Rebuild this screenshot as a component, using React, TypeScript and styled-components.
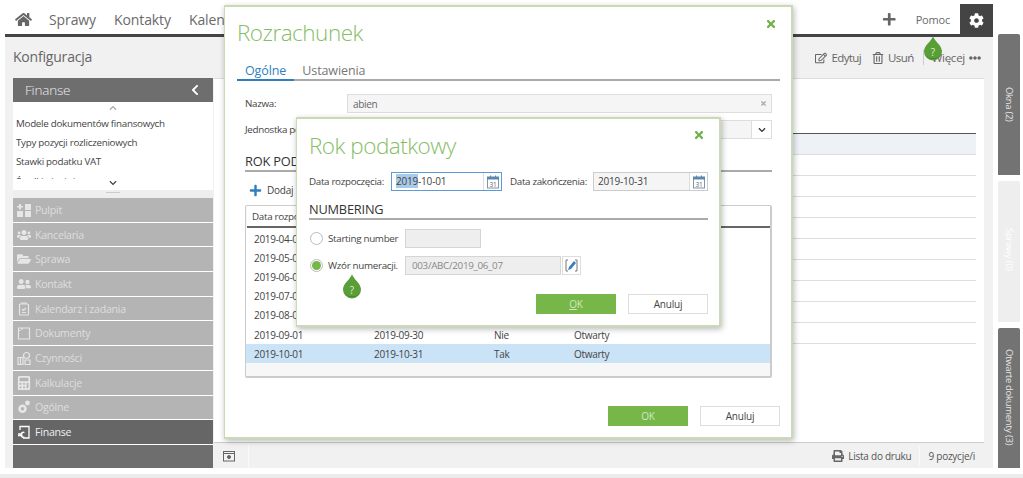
import React from 'react';
import styled, { createGlobalStyle } from 'styled-components';
import { FaHome, FaPlus, FaCog, FaRegEdit, FaRegTrashAlt, FaEllipsisH, FaChevronLeft, FaChevronDown, FaChevronUp, FaUsers, FaFolderOpen, FaUserFriends, FaCalculator, FaPrint, FaTimes } from 'react-icons/fa';

const Global = createGlobalStyle`
  html, body { margin: 0; padding: 0; background: #fff; }
  body { font-family: "Open Sans", "Noto Sans", sans-serif; color: #444; overflow: hidden; }
  * { box-sizing: border-box; }
`;

const Page = styled.div`position: relative; width: 1023px; height: 478px; overflow: hidden; display: flex; flex-direction: column;`;
const Shell = styled.div`display: flex; height: 468px; padding: 4px 0 0 5px;`;
const Strip = styled.div`height: 4px; margin-top: 6px; background: #ececec;`;
const Main = styled.div`width: 988px; display: flex; flex-direction: column;`;
const TopBar = styled.div`height: 33px; border-bottom: 3px solid #444; display: flex; align-items: center; font-size: 14px; color: #6a6a6a;`;
const HomeIcon = styled(FaHome)`font-size: 15px; width: 17px; color: #666; margin: 0 17px 0 10px;`;
const NavLink = styled.span`margin-right: 18px; letter-spacing: -0.1px;`;
const Spacer = styled.div`flex: 1;`;
const PlusIcon = styled(FaPlus)`font-size: 14.5px; color: #666; margin-right: 19px;`;
const Help = styled.span`font-size: 11px; margin-right: 10px; letter-spacing: -0.2px;`;
const GearBox = styled.div`width: 33px; height: 33px; margin-bottom: -3px; background: #444; color: #fff; display: flex; align-items: center; justify-content: center; font-size: 15px;`;
const Work = styled.div`flex: 1; background: #f1f1f1; padding: 0 9px 0 8px; display: flex; flex-direction: column; min-height: 0;`;
const WorkHead = styled.div`height: 41px; display: flex; align-items: center; padding: 0 3px 2px 0;`;
const WorkTitle = styled.div`font-size: 14px; color: #666; letter-spacing: -0.2px;`;
const Action = styled.span`display: flex; align-items: center; gap: 4px; font-size: 11.5px; color: #666; margin-left: ${p => p.$ml ?? 12}px; margin-top: 2px; letter-spacing: ${p => p.$tight ? -0.6 : -0.25}px; svg { font-size: 12px; }`;
const ActionSep = styled.span`width: 1px; height: 15px; background: #ccc; margin: 2px -4px 0 9px;`;
const WorkBody = styled.div`flex: 1; display: flex; min-height: 0;`;
const Sidebar = styled.div`width: 200px; display: flex; flex-direction: column;`;
const SideHead = styled.div`height: 24px; background: #6e6e6e; color: #eee; display: flex; align-items: center; justify-content: space-between; padding: 0 12px; font-size: 13.5px; font-weight: 300; letter-spacing: -0.2px; svg { color: #fff; font-size: 12px; }`;
const SideList = styled.div`position: relative; height: 88px; background: #fff;`;
const SideClip = styled.div`height: 77px; overflow: hidden; padding-top: 12px; font-size: 9.8px; color: #444; letter-spacing: -0.28px;`;
const SideItem = styled.div`height: 19.2px; line-height: 19.2px; padding-left: 3px;`;
const Scroller = styled.div`position: absolute; left: 96px; font-size: 8px; color: ${p => p.$dark ? '#444' : '#aaa'}; top: ${p => p.$top}px; line-height: 8px;`;
const Handle = styled.div`height: 8px; background: #eee; display: flex; justify-content: center; padding-top: 2px; &::after { content: ''; width: 14px; height: 1px; background: #ccc; }`;
const MenuList = styled.div`flex: 1; display: flex; flex-direction: column; background: #fff; gap: 1px;`;
const MenuItem = styled.div`height: 23.7px; flex: none; display: flex; align-items: center; gap: 4px; padding-left: 4px; font-size: 10.6px; letter-spacing: -0.25px; background: ${p => p.$active ? '#666' : '#b4b4b4'}; color: ${p => p.$active ? '#eee' : '#dedede'}; svg { width: 14px; height: 14px; flex: none; color: ${p => p.$active ? '#fff' : '#e6e6e6'}; }`;
const MenuFill = styled.div`flex: 1; background: #6e6e6e;`;
const Content = styled.div`flex: 1; display: flex; flex-direction: column; margin-left: 1px; border-top: 1px solid #ddd;`;
const Panel = styled.div`flex: 1; background: #fff; padding: 0 8px 0 10px;`;
const ListHead = styled.div`height: 55px; border-bottom: 1px solid #555;`;
const ListRow = styled.div`height: 21px; border-bottom: 1px solid #ddd; background: ${p => p.$shade ? '#eef2f6' : '#fff'};`;
const Status = styled.div`height: 26px; border-top: 1px solid #ccc; display: flex; align-items: center; font-size: 10px; color: #555; padding: 0 9px 0 9px;`;
const StatusBtn = styled.div`padding-right: 13px; border-right: 1px solid #fafafa; height: 22px; display: flex; align-items: center; color: #666; font-size: 12px; margin-right: auto;`;
const StatusItem = styled.span`display: flex; align-items: center; gap: 4px; letter-spacing: -0.25px; svg { font-size: 12px; color: #666; }`;
const StatusDiv = styled.span`width: 1px; height: 20px; background: #fafafa; margin: 0 8px;`;
const Rail = styled.div`width: 22px; margin-left: 5px; margin-top: 30px; display: flex; flex-direction: column; gap: 6px;`;
const RailTab = styled.div`flex: none; height: ${p => p.$h}px; overflow: hidden; border-radius: 2px 2px 0 0; background: ${p => p.$off ? '#eee' : '#737373'}; color: ${p => p.$off ? '#fff' : '#e4e4e4'}; writing-mode: vertical-rl; font-size: 9.5px; padding-top: ${p => p.$pad}px; display: flex; align-items: center; letter-spacing: -0.3px; white-space: nowrap;`;

const Modal = styled.div`position: absolute; left: ${p => p.$l}px; top: ${p => p.$t}px; width: ${p => p.$w}px; height: ${p => p.$h}px; background: #fff; border: 2px solid #c8dab6; border-left-width: 1.5px; box-shadow: 1px 2px 6px rgba(0,0,0,.28); display: flex; flex-direction: column;`;
const ModalTitle = styled.div`font-size: 22.5px; font-weight: 300; line-height: 30px; color: #86bd66; letter-spacing: -0.5px;`;
const Close = styled(FaTimes)`position: absolute; right: ${p => p.$r}px; top: ${p => p.$t}px; font-size: 12px; color: #72b04c;`;
const OuterBody = styled.div`flex: 1; display: flex; flex-direction: column; padding: 11px 11px 0 12px;`;
const Tabs = styled.div`display: flex; height: 25px; margin-top: 8px; padding-top: 6px; border-bottom: 2px solid #aaa; font-size: 12.5px;`;
const TabItem = styled.div`padding: 0 8px; height: 19px; line-height: 17px; letter-spacing: -0.1px; color: ${p => p.$on ? '#2f7fbf' : '#777'}; border-bottom: ${p => p.$on ? '2px solid #2f7fbf' : 'none'};`;
const Inner = styled.div`padding: 0 8px; display: flex; flex-direction: column;`;
const FormRow = styled.div`display: flex; align-items: center; height: 19px; margin-top: ${p => p.$mt}px; font-size: 9.8px; color: #444; letter-spacing: -0.3px;`;
const FormLabel = styled.div`width: 102px; flex: none; white-space: nowrap;`;
const TextBox = styled.div`flex: 1; height: 19px; background: #f5f5f5; border: 1px solid #ddd; display: flex; align-items: center; justify-content: space-between; padding: 0 4px 0 5px; color: #666; font-size: 10px; svg { font-size: 7px; color: #aaa; }`;
const Select = styled.div`flex: 1; height: 19px; background: #f5f5f5; border: 1px solid #ddd; display: flex; justify-content: flex-end;`;
const SelectBtn = styled.div`width: 20px; background: #fff; border-left: 1px solid #ddd; display: flex; align-items: center; justify-content: center; font-size: 8px; color: #333;`;
const Section = styled.div`font-size: 12.8px; height: 22px; line-height: 22px; border-bottom: 2px solid #aaa; margin-top: ${p => p.$mt}px; color: #333; letter-spacing: -0.2px;`;
const AddRow = styled.div`display: flex; align-items: center; gap: 5px; font-size: 10px; letter-spacing: -0.25px; height: 20px; margin: 8px 0 5px 4px; color: #444; svg { font-size: 13px; color: #2f7fbf; }`;
const Table = styled.div`height: 173px; width: 527px; border: 1px solid #ccc; border-width: 1px 2px 2px 1px; border-radius: 2px; background: #f7f7f7; display: flex; flex-direction: column;`;
const THead = styled.div`height: 22px; background: #fff; margin-left: 1px; border-bottom: 2px solid #666; font-size: 9.8px; letter-spacing: -0.3px; padding-left: 5px; line-height: 22px; color: #444;`;
const TBody = styled.div`padding-top: 1px; background: #fff;`;
const TRow = styled.div`height: 19.2px; display: grid; grid-template-columns: 120px 120px 80px 1fr; padding-left: 8px; align-items: center; font-size: 10px; letter-spacing: -0.3px; color: #444; background: ${p => p.$sel ? '#cbe3f6' : '#fff'};`;
const Footer = styled.div`margin-top: auto; display: flex; justify-content: flex-end; gap: 12px; padding-bottom: 11px;`;
const Btn = styled.div`width: 80px; height: 20px; display: flex; align-items: center; justify-content: center; font-size: 10px; letter-spacing: -0.2px; background: ${p => p.$ok ? '#77b74a' : '#fff'}; color: ${p => p.$ok ? '#cfe8bc' : '#444'}; border: 1px solid ${p => p.$ok ? '#77b74a' : '#ddd'}; u { text-decoration: underline; }`;

const InnerBody = styled.div`flex: 1; display: flex; flex-direction: column; padding: 12px 11px 0 12px;`;
const DateRow = styled.div`display: flex; align-items: center; height: 19px; margin-top: 11px; font-size: 9.8px; letter-spacing: -0.32px; color: #444; white-space: nowrap;`;
const DateLabel = styled.span`width: ${p => p.$w}px; flex: none;`;
const DateBox = styled.div`width: ${p => p.$w}px; height: 19px; margin-right: ${p => p.$mr}px; flex: none; display: flex; font-size: 10px; letter-spacing: -0.2px; color: #444; background: ${p => p.$focus ? '#fff' : '#f5f5f5'}; border: 1px solid ${p => p.$focus ? '#5b9bd5' : '#ccc'};`;
const DateText = styled.div`flex: 1; padding-left: 4px; line-height: 17px;`;
const Sel = styled.span`background: #a9c9e8;`;
const CalBtn = styled.div`width: 18px; border-left: 1px solid #ddd; background: #fff; display: flex; align-items: center; justify-content: center;`;
const NumRow = styled.div`display: flex; align-items: center; height: 19px; margin-top: ${p => p.$mt}px; font-size: 9.8px; letter-spacing: -0.3px; color: #444; white-space: nowrap;`;
const Radio = styled.span`width: 13px; height: 13px; border-radius: 50%; border: 1px solid #bbb; margin: 0 5px 0 1px; display: flex; align-items: center; justify-content: center; flex: none; &::after { content: ''; width: 9px; height: 9px; border-radius: 50%; background: ${p => p.$on ? '#77b74a' : 'transparent'}; }`;
const NumLabel = styled.span`width: 77px; flex: none;`;
const NumBox = styled.div`width: ${p => p.$w}px; height: 19px; background: #eee; border: 1px solid #d5d5d5; padding-left: 6px; line-height: 17px; color: #888; flex: none;`;
const PickBtn = styled.div`width: 19px; height: 19px; margin-left: 1px; border: 1px solid #ddd; display: flex; align-items: center; justify-content: center; flex: none;`;
const Drop = styled.div`position: absolute; left: ${p => p.$l}px; top: ${p => p.$t}px; width: 20px; height: 25px;`;
const DropMark = styled.span`position: absolute; left: 0; right: 0; top: 10px; text-align: center; font-size: 10px; line-height: 12px; color: #dcecd0;`;

const Grid = () => (<svg viewBox="0 0 14 14" fill="currentColor"><path d="M0 8h6v6H0zM8 8h6v6H8zM8 1h6v6H8zM2 1h2v2h2v1.500H4v2H2v-2H0V3h2z" /></svg>);
const Cal = () => (<svg width="14" height="14" viewBox="0 0 14 14" fill="none"><rect x="1.500" y="2.500" width="11" height="10.500" stroke="#7d97ad" /><rect x="1" y="1.500" width="12" height="3" fill="#5e87ad" /><path d="M4.500 0.500v2M9.500 0.500v2" stroke="#5e87ad" /><text x="7" y="11.500" textAnchor="middle" fontSize="6.500" fill="#666" fontFamily="Open Sans">31</text></svg>);
const Clip = () => (<svg viewBox="0 0 14 14" fill="none" stroke="currentColor" strokeWidth="1.2"><rect x="2.500" y="2" width="9" height="11" rx="1" /><path d="M5 2V1h4v1M5 7l1.500 1.500L9 6M5 10.500h4" /></svg>);
const Doc = () => (<svg viewBox="0 0 14 14" fill="none" stroke="currentColor" strokeWidth="1.2"><path d="M1.500 2h11v11h-11zM1.500 4.500h2M5 2v2" /></svg>);
const Tasks = () => (<svg viewBox="0 0 14 14" fill="none" stroke="currentColor" strokeWidth="1.2"><circle cx="9.500" cy="4.500" r="3" /><path d="M1 6.500h5v7H1zM8 9h5v4.500H8zM3.500 6.500v7" /></svg>);
const Gears = () => (<svg viewBox="0 0 14 14" fill="currentColor"><path fillRule="evenodd" d="M5.500 4.500a4 4 0 1 1 0 8.500 4 4 0 0 1 0-8.500zm0 2.500a1.700 1.700 0 1 0 0 3.400 1.700 1.700 0 0 0 0-3.400z" /><circle cx="10.500" cy="3" r="2.400" /></svg>);
const Euro = () => (<svg viewBox="0 0 14 14" fill="none" stroke="currentColor" strokeWidth="1.3"><path d="M3 5V1.500h9V13H6" /><path d="M7.500 7.500a2.500 2.500 0 1 0 0 4.500M1 9h4.500M1 10.600h4.500" /></svg>);
const Pick = () => (<svg width="15" height="15" viewBox="0 0 15 15" fill="none"><path d="M4 2H2v11h2M11 2h2v11h-2" stroke="#777" /><path d="M4 12l1-3 5-6 2 2-5 6z" fill="#3a7fbd" /></svg>);
const DropShape = () => (<svg width="20" height="25" viewBox="0 0 20 25"><path d="M10 0C11 5 19 9 19 15.500a9 9 0 0 1-18 0C1 9 9 5 10 0z" fill="#5a9e38" /><path d="M1.500 17a9 9 0 0 0 17 0 9 8 0 0 1-17 0z" fill="#4a7f2e" /></svg>);

const menu: [string, React.ReactNode][] = [
  ['Pulpit', <Grid />], ['Kancelaria', <FaUsers />], ['Sprawa', <FaFolderOpen />], ['Kontakt', <FaUserFriends />],
  ['Kalendarz i zadania', <Clip />], ['Dokumenty', <Doc />], ['Czynności', <Tasks />], ['Kalkulacje', <FaCalculator />], ['Ogólne', <Gears />],
];
const rows = [
  ['2019-04-01', '2019-04-30', 'Nie', 'Otwarty'], ['2019-05-01', '2019-05-31', 'Nie', 'Otwarty'], ['2019-06-01', '2019-06-30', 'Nie', 'Otwarty'],
  ['2019-07-01', '2019-07-31', 'Nie', 'Otwarty'], ['2019-08-01', '2019-08-31', 'Nie', 'Otwarty'], ['2019-09-01', '2019-09-30', 'Nie', 'Otwarty'], ['2019-10-01', '2019-10-31', 'Tak', 'Otwarty'],
];

export default function App() {
  return (
    <Page>
      <Global />
      <Shell>
        <Main>
          <TopBar>
            <HomeIcon />
            <NavLink>Sprawy</NavLink>
            <NavLink>Kontakty</NavLink>
            <NavLink>Kalendarz</NavLink>
            <Spacer />
            <PlusIcon />
            <Help>Pomoc</Help>
            <GearBox><FaCog /></GearBox>
          </TopBar>
          <Work>
            <WorkHead>
              <WorkTitle>Konfiguracja</WorkTitle>
              <Spacer />
              <Action $tight><FaRegEdit />Edytuj</Action>
              <Action $tight $ml={11}><FaRegTrashAlt />Usuń</Action>
              <ActionSep />
              <Action>Więcej<FaEllipsisH /></Action>
            </WorkHead>
            <WorkBody>
              <Sidebar>
                <SideHead>Finanse<FaChevronLeft /></SideHead>
                <SideList>
                  <Scroller $top={2}><FaChevronUp /></Scroller>
                  <SideClip>
                    <SideItem>Modele dokumentów finansowych</SideItem>
                    <SideItem>Typy pozycji rozliczeniowych</SideItem>
                    <SideItem>Stawki podatku VAT</SideItem>
                    <SideItem>Środki pieniężne</SideItem>
                  </SideClip>
                  <Scroller $top={77} $dark><FaChevronDown /></Scroller>
                </SideList>
                <Handle />
                <MenuList>
                  {menu.map(([t, i]) => <MenuItem key={t}>{i}{t}</MenuItem>)}
                  <MenuItem $active><Euro />Finanse</MenuItem>
                  <MenuFill />
                </MenuList>
              </Sidebar>
              <Content>
                <Panel>
                  <ListHead />
                  <ListRow $shade />
                  {[0, 1, 2, 3, 4, 5, 6, 7, 8].map(i => <ListRow key={i} />)}
                </Panel>
                <Status>
                  <StatusBtn><svg width="12" height="12" viewBox="0 0 12 12" fill="none" stroke="#666"><rect x=".5" y="1.500" width="11" height="9.500" /><path d="M.5 3.500h11" /><circle cx="6" cy="7" r="1.500" fill="#666" /></svg></StatusBtn>
                  <StatusItem><FaPrint />Lista do druku</StatusItem>
                  <StatusDiv />
                  <StatusItem>9 pozycje/i</StatusItem>
                </Status>
              </Content>
            </WorkBody>
          </Work>
        </Main>
        <Rail>
          <RailTab $h={141} $pad={53}>Okna (2)</RailTab>
          <RailTab $h={141} $off $pad={47}>Sprawy (0)</RailTab>
          <RailTab $h={140} $pad={21}>Otwarte dokumenty (3)</RailTab>
        </Rail>
      </Shell>
      <Strip />

      <Modal $l={224} $t={5} $w={569} $h={434}>
        <Close $r={14} $t={11} />
        <OuterBody>
          <ModalTitle>Rozrachunek</ModalTitle>
          <Tabs>
            <TabItem $on>Ogólne</TabItem>
            <TabItem>Ustawienia</TabItem>
          </Tabs>
          <Inner>
            <FormRow $mt={13}><FormLabel>Nazwa:</FormLabel><TextBox>abien<FaTimes /></TextBox></FormRow>
            <FormRow $mt={7}><FormLabel>Jednostka podatkowa:</FormLabel><Select><SelectBtn><FaChevronDown /></SelectBtn></Select></FormRow>
            <Section $mt={11}>ROK PODATKOWY</Section>
            <AddRow><FaPlus />Dodaj</AddRow>
            <Table>
              <THead>Data rozpoczęcia</THead>
              <TBody>
                {rows.map((r, i) => (
                  <TRow key={r[0]} $sel={i === 6}>{r.map(c => <span key={c}>{c}</span>)}</TRow>
                ))}
              </TBody>
            </Table>
          </Inner>
          <Footer><Btn $ok>OK</Btn><Btn>Anuluj</Btn></Footer>
        </OuterBody>
      </Modal>

      <Modal $l={296} $t={117} $w={425} $h={210}>
        <Close $r={14} $t={10} />
        <InnerBody>
          <ModalTitle>Rok podatkowy</ModalTitle>
          <DateRow>
            <DateLabel $w={82}>Data rozpoczęcia:</DateLabel>
            <DateBox $w={111} $mr={8} $focus><DateText><Sel>2019</Sel>-10-01</DateText><CalBtn><Cal /></CalBtn></DateBox>
            <DateLabel $w={83}>Data zakończenia:</DateLabel>
            <DateBox $w={115}><DateText>2019-10-31</DateText><CalBtn><Cal /></CalBtn></DateBox>
          </DateRow>
          <Section $mt={7}>NUMBERING</Section>
          <NumRow $mt={9}><Radio /><NumLabel>Starting number</NumLabel><NumBox $w={76} /></NumRow>
          <NumRow $mt={8}><Radio $on /><NumLabel>Wzór numeracji.</NumLabel><NumBox $w={156}>003/ABC/2019_06_07</NumBox><PickBtn><Pick /></PickBtn></NumRow>
          <Footer><Btn $ok><span><u>O</u>K</span></Btn><Btn>Anuluj</Btn></Footer>
        </InnerBody>
      </Modal>

      <Drop $l={923} $t={36}><DropShape /><DropMark>?</DropMark></Drop>
      <Drop $l={342} $t={274}><DropShape /><DropMark>?</DropMark></Drop>
    </Page>
  );
}
